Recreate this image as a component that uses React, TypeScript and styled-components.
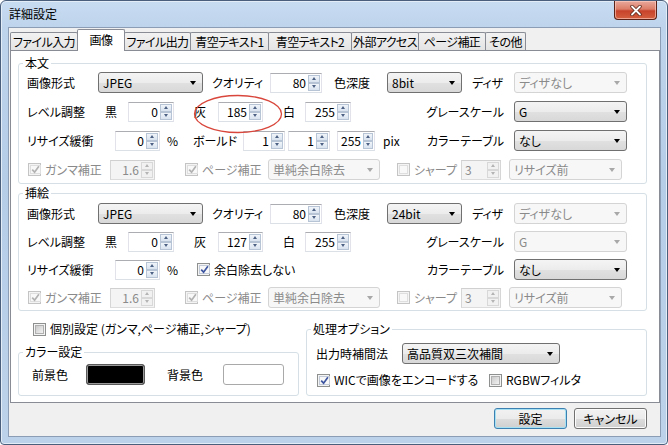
import React from 'react';
import styled, { createGlobalStyle } from 'styled-components';

const GlobalStyle = createGlobalStyle`
  html, body {
    margin: 0;
    padding: 0;
    background: #fff;
  }
  body {
    font-family: "Noto Sans CJK JP", "Liberation Sans", sans-serif;
    font-size: 12px;
    color: #000;
    font-feature-settings: "palt";
  }
  * {
    box-sizing: border-box;
  }
`;

const Window = styled.div`
  width: 668px;
  height: 445px;
  display: flex;
  flex-direction: column;
  padding: 0 6px 7px 7px;
  border: 1px solid #4a5f7c;
  border-radius: 6px 6px 4px 4px;
  background: linear-gradient(180deg, #c8dcf1 0%, #bed4ec 6%, #b6cde8 40%, #bcd2ea 100%);
  box-shadow: inset 0 0 0 1px #e2edf8;
`;

const TitleBar = styled.div`
  height: 26px;
  flex-shrink: 0;
  display: flex;
  align-items: flex-start;
`;

const Title = styled.span`
  padding-top: 5px;
  padding-left: 1px;
  font-size: 12px;
  line-height: 16px;
  color: #000;
`;

const CloseButton = styled.div`
  margin-left: auto;
  margin-right: 4px;
  width: 43px;
  height: 19px;
  border: 1px solid #5b2217;
  border-top: none;
  border-radius: 0 0 4px 4px;
  background: linear-gradient(180deg, #e9a99c 0%, #dc7d68 45%, #c7432b 55%, #d4603f 100%);
  box-shadow: inset 0 0 0 1px rgba(255, 210, 200, 0.6);
  display: flex;
  align-items: center;
  justify-content: center;
`;

const Client = styled.div`
  flex: 1;
  display: flex;
  flex-direction: column;
  background: #f0f0f0;
  border: 1px solid #8b9db4;
  padding: 0 0 0 1px;
`;

const TabStrip = styled.div`
  height: 22px;
  flex-shrink: 0;
  display: flex;
  align-items: flex-end;
  position: relative;
  z-index: 1;
`;

const Tab = styled.div<{ $w: number; $active?: boolean }>`
  width: ${p => p.$w}px;
  height: ${p => (p.$active ? 22 : 18)}px;
  margin-bottom: ${p => (p.$active ? -1 : 0)}px;
  margin-left: -1px;
  &:first-child {
    margin-left: 0;
  }
  border: 1px solid #898c95;
  border-bottom: none;
  border-radius: 2px 2px 0 0;
  background: ${p => (p.$active ? '#fff' : 'linear-gradient(180deg, #f2f2f2, #e4e4e4)')};
  position: relative;
  z-index: ${p => (p.$active ? 2 : 1)};
  display: flex;
  align-items: ${p => (p.$active ? 'flex-start' : 'center')};
  padding-top: ${p => (p.$active ? 2 : 0)}px;
  justify-content: center;
  white-space: nowrap;
  line-height: 15px;
  letter-spacing: -0.6px;
  overflow: hidden;
`;

const Panel = styled.div`
  height: 353px;
  flex-shrink: 0;
  width: 650px;
  background: #fff;
  border: 1px solid #898c95;
  padding: 5px 12px 0 7px;
  position: relative;
`;

const Group = styled.fieldset<{ $w?: number; $mt?: number }>`
  margin: ${p => p.$mt ?? 0}px 0 0 0;
  padding: 0 4px;
  width: ${p => (p.$w ? `${p.$w}px` : '100%')};
  min-width: 0;
  border: 1px solid #d5dfe5;
  border-radius: 3px;
`;

const Legend = styled.legend`
  padding: 0 2px;
  margin-left: 0;
  line-height: 14px;
  font-size: 12px;
`;

const GroupBody = styled.div<{ $pl: number; $pt: number; $pb: number; $gap: number }>`
  display: flex;
  flex-direction: column;
  gap: ${p => p.$gap}px;
  padding: ${p => p.$pt}px 0 ${p => p.$pb}px ${p => p.$pl}px;
`;

const Row = styled.div<{ $h?: number; $pl?: number; $mt?: number }>`
  display: flex;
  align-items: center;
  height: ${p => p.$h ?? 21}px;
  padding-left: ${p => p.$pl ?? 0}px;
  margin-top: ${p => p.$mt ?? 0}px;
`;

const Label = styled.span<{ $w: number; $right?: boolean; $disabled?: boolean }>`
  width: ${p => p.$w}px;
  flex-shrink: 0;
  white-space: nowrap;
  text-align: ${p => (p.$right ? 'right' : 'left')};
  padding-right: ${p => (p.$right ? 10 : 0)}px;
  color: ${p => (p.$disabled ? '#8a8a8a' : '#000')};
  line-height: 16px;
`;

const Gap = styled.span<{ $w: number }>`
  width: ${p => p.$w}px;
  flex-shrink: 0;
`;

const ComboBox = styled.div<{ $w: number; $disabled?: boolean }>`
  width: ${p => p.$w}px;
  height: 21px;
  flex-shrink: 0;
  display: flex;
  align-items: center;
  padding: 0 6px 0 4px;
  border: 1px solid ${p => (p.$disabled ? '#d4d4d4' : '#707070')};
  border-radius: 3px;
  background: ${p =>
    p.$disabled ? '#f7f7f7' : 'linear-gradient(180deg, #f4f4f4 0%, #ececec 50%, #e0e0e0 55%, #d8d8d8 100%)'};
  color: ${p => (p.$disabled ? '#8a8a8a' : '#000')};
  white-space: nowrap;
  line-height: 16px;
`;

const ComboText = styled.span`
  flex: 1;
  overflow: hidden;
`;

const ComboArrow = styled.span<{ $disabled?: boolean }>`
  width: 0;
  height: 0;
  border-left: 3.5px solid transparent;
  border-right: 3.5px solid transparent;
  border-top: 4px solid ${p => (p.$disabled ? '#a8a8a8' : '#000')};
`;

const SpinBox = styled.div<{ $w: number; $disabled?: boolean }>`
  width: ${p => p.$w}px;
  height: 20px;
  flex-shrink: 0;
  display: flex;
  align-items: center;
  padding: 1px;
  border: 1px solid ${p => (p.$disabled ? '#d0d0d0' : '#abadb3')};
  border-bottom-color: ${p => (p.$disabled ? '#dcdcdc' : '#dbdfe6')};
  border-left-color: ${p => (p.$disabled ? '#d6d6d6' : '#e2e3ea')};
  border-right-color: ${p => (p.$disabled ? '#d6d6d6' : '#e2e3ea')};
  background: ${p => (p.$disabled ? '#f4f4f4' : '#fff')};
  color: ${p => (p.$disabled ? '#8a8a8a' : '#000')};
`;

const SpinValue = styled.span<{ $left?: boolean }>`
  flex: 1;
  text-align: ${p => (p.$left ? 'left' : 'right')};
  padding: 0 2px;
  line-height: 16px;
`;

const SpinButtons = styled.div`
  width: 12px;
  height: 16px;
  display: flex;
  flex-direction: column;
`;

const SpinBtn = styled.div<{ $disabled?: boolean }>`
  flex: 1;
  display: flex;
  align-items: center;
  justify-content: center;
  border: 1px solid ${p => (p.$disabled ? '#d8d8d8' : '#b7c4d5')};
  background: ${p => (p.$disabled ? '#f1f1f1' : 'linear-gradient(180deg, #f1f5fa, #d9e3ef)')};
`;

const Tri = styled.span<{ $up?: boolean; $disabled?: boolean }>`
  width: 0;
  height: 0;
  border-left: 2.5px solid transparent;
  border-right: 2.5px solid transparent;
  ${p =>
    p.$up
      ? `border-bottom: 3px solid ${p.$disabled ? '#b4b4b4' : '#4d6185'};`
      : `border-top: 3px solid ${p.$disabled ? '#b4b4b4' : '#4d6185'};`}
`;

const CheckItem = styled.label<{ $w?: number; $disabled?: boolean }>`
  width: ${p => (p.$w ? `${p.$w}px` : 'auto')};
  flex-shrink: 0;
  display: flex;
  align-items: center;
  gap: 4px;
  white-space: nowrap;
  color: ${p => (p.$disabled ? '#8a8a8a' : '#000')};
  line-height: 16px;
`;

const Box = styled.span<{ $disabled?: boolean }>`
  width: 13px;
  height: 13px;
  flex-shrink: 0;
  border: 1px solid ${p => (p.$disabled ? '#c4c4c4' : '#8e8f8f')};
  padding: 1px;
  background: #f4f4f4;
  display: flex;
`;

const BoxInner = styled.span<{ $disabled?: boolean; $checked?: boolean }>`
  flex: 1;
  display: flex;
  align-items: center;
  justify-content: center;
  border: 1px solid ${p => (p.$disabled ? '#dedede' : p.$checked ? '#c2cad8' : '#b0b0b0')};
  background: ${p =>
    p.$disabled || p.$checked ? '#f8f8f8' : 'linear-gradient(135deg, #cbcbcb, #f2f2f2)'};
`;

const Swatch = styled.div<{ $color: string; $w: number }>`
  width: ${p => p.$w}px;
  height: 21px;
  flex-shrink: 0;
  border: 1px solid ${p => (p.$color === '#000' ? '#5a5a5a' : '#a9a9a9')};
  border-radius: 3px;
  background: ${p => p.$color};
  box-shadow: inset 0 0 0 1px ${p => (p.$color === '#000' ? '#9a9a9a' : '#fff')};
`;

const BottomArea = styled.div`
  display: flex;
  gap: 7px;
  margin-top: 2px;
`;

const Column = styled.div<{ $w: number }>`
  width: ${p => p.$w}px;
  display: flex;
  flex-direction: column;
`;

const Footer = styled.div`
  flex: 1;
  display: flex;
  justify-content: flex-end;
  align-items: flex-start;
  gap: 7px;
  padding: 5px 13px 0 0;
`;

const Button = styled.button<{ $primary?: boolean }>`
  width: 73px;
  height: 21px;
  padding: 0;
  font: inherit;
  color: #000;
  border: 1px solid ${p => (p.$primary ? '#3c7fb1' : '#707070')};
  border-radius: 3px;
  background: linear-gradient(180deg, #f2f2f2 0%, #ebebeb 50%, #dddddd 51%, #cfcfcf 100%);
  box-shadow: inset 0 0 0 1px ${p => (p.$primary ? '#a6e0f3' : '#fcfcfc')};
  line-height: 16px;
`;

const Mark = styled.svg`
  position: absolute;
  left: 182px;
  top: 43px;
  pointer-events: none;
`;

const CheckMark = ({ color }: { color: string }) => (
  <svg width="9" height="9" viewBox="0 0 9 9">
    <path d="M1.2 4.6 L3.6 7.2 L7.9 1.2" fill="none" stroke={color} strokeWidth="1.7" />
  </svg>
);

const Check = ({ checked, disabled }: { checked?: boolean; disabled?: boolean }) => (
  <Box $disabled={disabled}>
    <BoxInner $disabled={disabled} $checked={checked}>
      {checked && <CheckMark color={disabled ? '#b2b2b2' : '#3e56a0'} />}
    </BoxInner>
  </Box>
);

const Combo = ({ w, value, disabled }: { w: number; value: string; disabled?: boolean }) => (
  <ComboBox $w={w} $disabled={disabled}>
    <ComboText>{value}</ComboText>
    <ComboArrow $disabled={disabled} />
  </ComboBox>
);

const Spin = ({ w, value, disabled, left }: { w: number; value: string; disabled?: boolean; left?: boolean }) => (
  <SpinBox $w={w} $disabled={disabled}>
    <SpinValue $left={left}>{value}</SpinValue>
    <SpinButtons>
      <SpinBtn $disabled={disabled}>
        <Tri $up $disabled={disabled} />
      </SpinBtn>
      <SpinBtn $disabled={disabled}>
        <Tri $disabled={disabled} />
      </SpinBtn>
    </SpinButtons>
  </SpinBox>
);

const tabs = [
  { label: 'ファイル入力', w: 68 },
  { label: '画像', w: 48, active: true },
  { label: 'ファイル出力', w: 67 },
  { label: '青空テキスト1', w: 79 },
  { label: '青空テキスト2', w: 84 },
  { label: '外部アクセス', w: 68 },
  { label: 'ページ補正', w: 68 },
  { label: 'その他', w: 41 },
];

interface ImageGroupProps {
  title: string;
  depth: string;
  gray: string;
  grayScaleEnabled: boolean;
  keepMargin?: boolean;
  mt: number;
  gap: number;
  pt: number;
  pb: number;
}

const ImageGroup = ({ title, depth, gray, grayScaleEnabled, keepMargin, mt, gap, pt, pb }: ImageGroupProps) => (
  <Group $mt={mt}>
    <Legend>{title}</Legend>
    <GroupBody $pl={4} $pt={pt} $pb={pb} $gap={gap}>
      <Row>
        <Label $w={71}>画像形式</Label>
        <Combo w={105} value="JPEG" />
        <Gap $w={9} />
        <Label $w={58}>クオリティ</Label>
        <Spin w={52} value="80" />
        <Gap $w={12} />
        <Label $w={53}>色深度</Label>
        <Combo w={75} value={depth} />
        <Gap $w={10} />
        <Label $w={42}>ディザ</Label>
        <Combo w={113} value="ディザなし" disabled />
      </Row>
      <Row>
        <Label $w={78}>レベル調整</Label>
        <Label $w={23}>黒</Label>
        <Spin w={46} value="0" />
        <Gap $w={20} />
        <Label $w={24}>灰</Label>
        <Spin w={45} value={gray} />
        <Gap $w={20} />
        <Label $w={22}>白</Label>
        <Spin w={46} value="255" />
        <Label $w={163} $right>グレースケール</Label>
        <Combo w={113} value="G" disabled={!grayScaleEnabled} />
      </Row>
      <Row>
        <Label $w={88}>リサイズ緩衝</Label>
        <Spin w={45} value="0" />
        <Gap $w={7} />
        <Label $w={26}>%</Label>
        {keepMargin ? (
          <>
            <Gap $w={4} />
            <CheckItem $w={214}>
              <Check checked />
              余白除去しない
            </CheckItem>
          </>
        ) : (
          <>
            <Label $w={50}>ボールド</Label>
            <Spin w={42} value="1" />
            <Gap $w={3} />
            <Spin w={42} value="1" />
            <Gap $w={7} />
            <Spin w={38} value="255" />
            <Gap $w={8} />
            <Label $w={28}>pix</Label>
          </>
        )}
        <Label $w={103} $right>カラーテーブル</Label>
        <Combo w={113} value="なし" />
      </Row>
      <Row>
        <Gap $w={1} />
        <CheckItem $w={82} $disabled>
          <Check checked disabled />
          ガンマ補正
        </CheckItem>
        <Spin w={45} value="1.6" disabled />
        <Gap $w={30} />
        <CheckItem $w={83} $disabled>
          <Check checked disabled />
          ページ補正
        </CheckItem>
        <Combo w={112} value="単純余白除去" disabled />
        <Gap $w={17} />
        <CheckItem $w={64} $disabled>
          <Check disabled />
          シャープ
        </CheckItem>
        <Spin w={40} value="3" disabled left />
        <Gap $w={8} />
        <Combo w={113} value="リサイズ前" disabled />
      </Row>
    </GroupBody>
  </Group>
);

export default function App() {
  return (
    <>
      <GlobalStyle />
      <Window>
        <TitleBar>
          <Title>詳細設定</Title>
          <CloseButton>
            <svg width="12" height="11" viewBox="0 0 12 11">
              <path d="M2 1.5 L10 9.5 M10 1.5 L2 9.5" stroke="#5a2418" strokeWidth="3.4" strokeLinecap="round" />
              <path d="M2 1.5 L10 9.5 M10 1.5 L2 9.5" stroke="#fff" strokeWidth="1.8" strokeLinecap="round" />
            </svg>
          </CloseButton>
        </TitleBar>
        <Client>
          <TabStrip>
            {tabs.map(t => (
              <Tab key={t.label} $w={t.w} $active={t.active}>
                {t.label}
              </Tab>
            ))}
          </TabStrip>
          <Panel>
            <ImageGroup title="本文" depth="8bit" gray="185" grayScaleEnabled mt={0} gap={8} pt={2} pb={3} />
            <ImageGroup title="挿絵" depth="24bit" gray="127" grayScaleEnabled={false} keepMargin mt={2} gap={7} pt={3} pb={2} />
            <BottomArea>
              <Column $w={281}>
                <Row $h={14} $pl={15} $mt={9}>
                  <CheckItem>
                    <Check />
                    個別設定 (ガンマ,ページ補正,シャープ)
                  </CheckItem>
                </Row>
                <Group $mt={9}>
                  <Legend>カラー設定</Legend>
                  <GroupBody $pl={9} $pt={5} $pb={10} $gap={0}>
                    <Row $h={21}>
                      <Label $w={54}>前景色</Label>
                      <Swatch $w={59} $color="#000" />
                      <Gap $w={22} />
                      <Label $w={56}>背景色</Label>
                      <Swatch $w={61} $color="#fff" />
                    </Row>
                  </GroupBody>
                </Group>
              </Column>
              <Column $w={341}>
                <Group $mt={9}>
                  <Legend>処理オプション</Legend>
                  <GroupBody $pl={5} $pt={7} $pb={8} $gap={9}>
                    <Row $h={21}>
                      <Label $w={86}>出力時補間法</Label>
                      <Combo w={158} value="高品質双三次補間" />
                    </Row>
                    <Row $h={14} $pl={1}>
                      <CheckItem $w={172}>
                        <Check checked />
                        WICで画像をエンコードする
                      </CheckItem>
                      <CheckItem>
                        <Check />
                        RGBWフィルタ
                      </CheckItem>
                    </Row>
                  </GroupBody>
                </Group>
              </Column>
            </BottomArea>
            <Mark width="90" height="40" viewBox="0 0 90 40">
              <ellipse cx="45" cy="20" rx="43.5" ry="18.5" fill="none" stroke="#d9473c" strokeWidth="1.3" />
            </Mark>
          </Panel>
          <Footer>
            <Button $primary>設定</Button>
            <Button>キャンセル</Button>
          </Footer>
        </Client>
      </Window>
    </>
  );
}
